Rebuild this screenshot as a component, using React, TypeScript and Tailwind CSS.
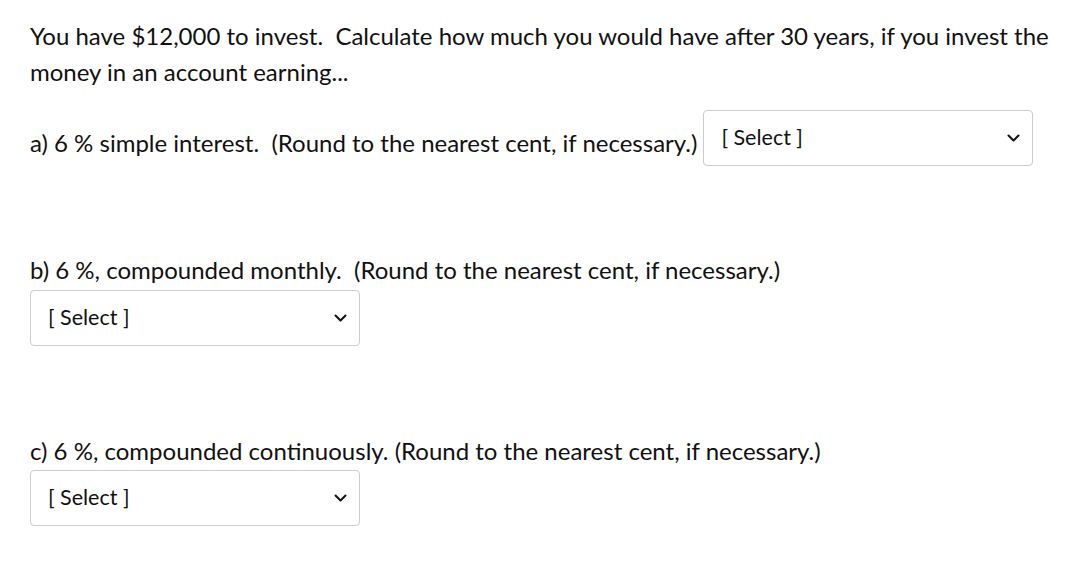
import React from 'react';

function Chevron() {
  return (
    <svg width="13" height="8" viewBox="0 0 13 8" fill="none" className="shrink-0">
      <path d="M1.5 1.5 L6.5 6.5 L11.5 1.5" stroke="#111" strokeWidth="2" strokeLinecap="round" strokeLinejoin="round" />
    </svg>
  );
}

function SelectBox() {
  return (
    <div className="flex h-[56px] w-[330px] shrink-0 items-center justify-between rounded-[4px] border border-[#c7cdd1] bg-white pl-[17px] pr-[12px]">
      <span className="mt-[-3px] text-[21.5px] leading-[24px] text-[#111]">[ Select ]</span>
      <Chevron />
    </div>
  );
}

export default function App() {
  return (
    <div className="min-h-[569px] w-[1071px] bg-white pl-[30px] pt-[18px] text-[24px] leading-[36px] text-[#111]" style={{ fontFamily: 'Lato, "Open Sans", sans-serif' }}>
      <p>
        You have $12,000 to invest.&nbsp; Calculate how much you would have after 30 years, if you invest the
        <br />
        money in an account earning...
      </p>

      <div className="mt-[20px] flex items-start gap-[6px]">
        <span className="mt-[15px] whitespace-nowrap">
          a) 6 % simple interest.&nbsp; (Round to the nearest cent, if necessary.)
        </span>
        <SelectBox />
      </div>

      <p className="mt-[86px]">b) 6 %, compounded monthly.&nbsp; (Round to the nearest cent, if necessary.)</p>
      <div className="mt-[2px]">
        <SelectBox />
      </div>

      <p className="mt-[87px]">c) 6 %, compounded continuously. (Round to the nearest cent, if necessary.)</p>
      <div className="mt-[1px]">
        <SelectBox />
      </div>
    </div>
  );
}
